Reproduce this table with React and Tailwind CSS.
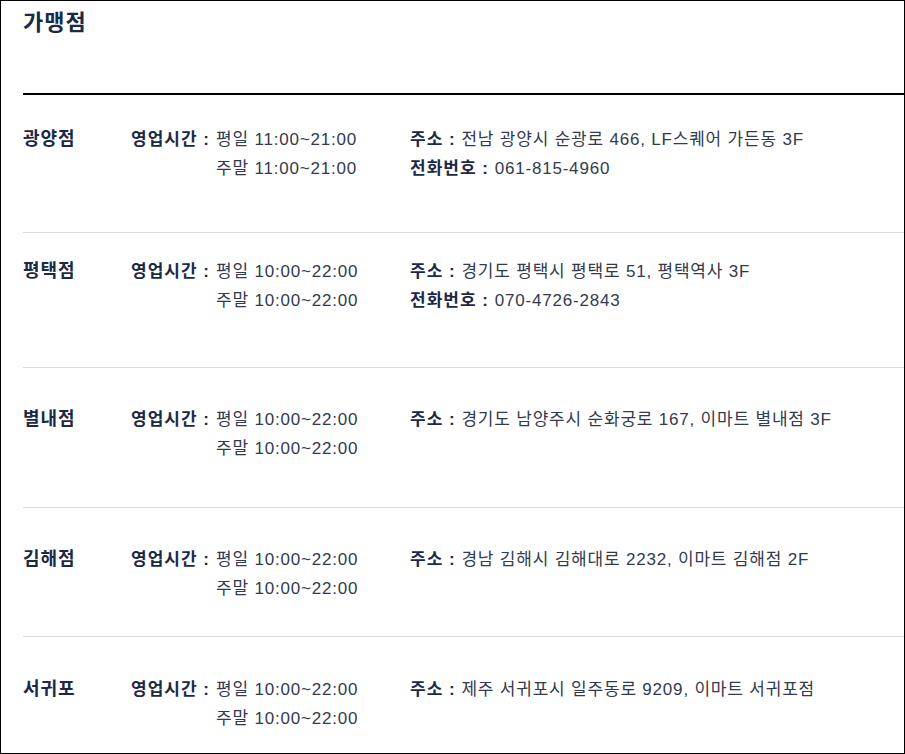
const stores = [
  {
    name: '광양점',
    weekday: '11:00~21:00',
    weekend: '11:00~21:00',
    address: '전남 광양시 순광로 466, LF스퀘어 가든동 3F',
    phone: '061-815-4960',
    pad: 'pt-[30px] pb-[49px]',
  },
  {
    name: '평택점',
    weekday: '10:00~22:00',
    weekend: '10:00~22:00',
    address: '경기도 평택시 평택로 51, 평택역사 3F',
    phone: '070-4726-2843',
    pad: 'pt-[24px] pb-[52px]',
  },
  {
    name: '별내점',
    weekday: '10:00~22:00',
    weekend: '10:00~22:00',
    address: '경기도 남양주시 순화궁로 167, 이마트 별내점 3F',
    pad: 'pt-[37px] pb-[44px]',
  },
  {
    name: '김해점',
    weekday: '10:00~22:00',
    weekend: '10:00~22:00',
    address: '경남 김해시 김해대로 2232, 이마트 김해점 2F',
    pad: 'pt-[37px] pb-[33px]',
  },
  {
    name: '서귀포',
    weekday: '10:00~22:00',
    weekend: '10:00~22:00',
    address: '제주 서귀포시 일주동로 9209, 이마트 서귀포점',
    pad: 'pt-[38px] pb-[18px]',
  },
]

function StoreRow({ store, last }) {
  return (
    <div className={`flex text-[17px] leading-[29px] tracking-[1px] ${store.pad} ${last ? '' : 'border-b border-[#dcdcdc]'}`}>
      <div className="w-[108px] shrink-0 text-[18px] font-bold text-[#1c2946]">{store.name}</div>

      {/* hours */}
      <div className="flex w-[279px] shrink-0">
        <span className="w-[85px] shrink-0 font-bold text-[#1c2946]">영업시간 :</span>
        <div className="tracking-[0.8px] text-[#333a4d]">
          <p>평일 {store.weekday}</p>
          <p>주말 {store.weekend}</p>
        </div>
      </div>

      {/* address + phone */}
      <div className="tracking-[0.8px] text-[#333a4d]">
        <p>
          <span className="font-bold tracking-[1px] text-[#1c2946]">주소 : </span>
          {store.address}
        </p>
        {store.phone && (
          <p>
            <span className="font-bold tracking-[1px] text-[#1c2946]">전화번호 : </span>
            {store.phone}
          </p>
        )}
      </div>
    </div>
  )
}

export default function App() {
  return (
    <div
      className="w-[905px] h-[754px] overflow-hidden border border-black bg-white pl-[22px]"
      style={{ fontFamily: '"Liberation Sans", "Noto Sans CJK KR", sans-serif' }}
    >
      <div className="h-[94px] border-b-2 border-black pt-[7px]">
        <h1 className="text-[22px] leading-[30px] tracking-[1px] font-bold text-[#1c2946]">가맹점</h1>
      </div>
      {stores.map((s, i) => (
        <StoreRow key={s.name} store={s} last={i === stores.length - 1} />
      ))}
    </div>
  )
}
